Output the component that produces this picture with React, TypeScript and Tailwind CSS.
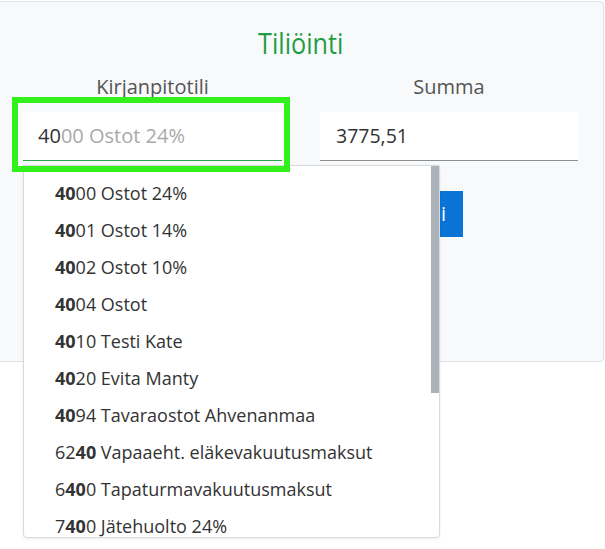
import React from "react";

const items: { pre: string; bold: string; post: string }[] = [
  { pre: "", bold: "40", post: "00 Ostot 24%" },
  { pre: "", bold: "40", post: "01 Ostot 14%" },
  { pre: "", bold: "40", post: "02 Ostot 10%" },
  { pre: "", bold: "40", post: "04 Ostot" },
  { pre: "", bold: "40", post: "10 Testi Kate" },
  { pre: "", bold: "40", post: "20 Evita Manty" },
  { pre: "", bold: "40", post: "94 Tavaraostot Ahvenanmaa" },
  { pre: "62", bold: "40", post: " Vapaaeht. eläkevakuutusmaksut" },
  { pre: "6", bold: "40", post: "0 Tapaturmavakuutusmaksut" },
  { pre: "7", bold: "40", post: "0 Jätehuolto 24%" },
];

export default function App() {
  return (
    <div className="w-[605px] h-[549px] bg-white overflow-hidden relative font-['Open_Sans',sans-serif]">
      <div className="mt-[1px] -ml-[3px] w-[607px] h-[361px] bg-[#f8f9fa] border border-[#dee2e6] rounded-[4px] px-[25px] pt-[21px]">
        <h2 className="text-center text-[#1f9d45] text-[30px] leading-[40px]">
          <span className="inline-block scale-x-[0.84]">Tiliöinti</span>
        </h2>
        <div className="flex gap-[38px] mt-[12px]">
          <div className="w-[259px] flex flex-col items-center">
            <div className="text-[20px] leading-[24px] text-[#555] mb-[13px]">Kirjanpitotili</div>
            <div className="relative w-full h-[49px] bg-white border-b border-[#2ea44f] pl-[15px] flex items-center text-[20px]">
              <span className="text-[#333]">40</span>
              <span className="text-[#a9a9a9]">00 Ostot 24%</span>
              <div className="absolute z-20 left-[-11px] top-[-15px] w-[278px] h-[75px] border-[6px] border-[#31f01c] pointer-events-none" />
              <div className="absolute z-10 left-0 top-[53px] w-[417px] h-[373px] bg-white border border-[#d8dbde] rounded-b-[4px] shadow-[0_1px_3px_rgba(0,0,0,0.08)] overflow-hidden">
                <ul className="pt-[9px] pl-[31px]">
                  {items.map((it, i) => (
                    <li key={i} className="h-[37px] flex items-center text-[18px] text-[#333] whitespace-pre">
                      <span>{it.pre}</span>
                      <span className="font-bold">{it.bold}</span>
                      <span>{it.post}</span>
                    </li>
                  ))}
                </ul>
                <div className="absolute right-0 top-0 w-[8px] h-[227px] bg-[#abb2b9]" />
              </div>
            </div>
          </div>
          <div className="w-[258px] flex flex-col items-center">
            <div className="text-[20px] leading-[24px] text-[#555] mb-[13px]">Summa</div>
            <div className="w-full h-[49px] bg-white border-b border-[#8f8f8f] pl-[16px] flex items-center text-[19.5px] text-[#333]">
              3775,51
            </div>
          </div>
        </div>
        <div className="mt-[30px] pl-[307px]">
          <button className="w-[133px] h-[46px] bg-[#0a74d6] text-white text-[20px] text-right pr-[17px]">
            Lisää tili
          </button>
        </div>
      </div>
    </div>
  );
}
